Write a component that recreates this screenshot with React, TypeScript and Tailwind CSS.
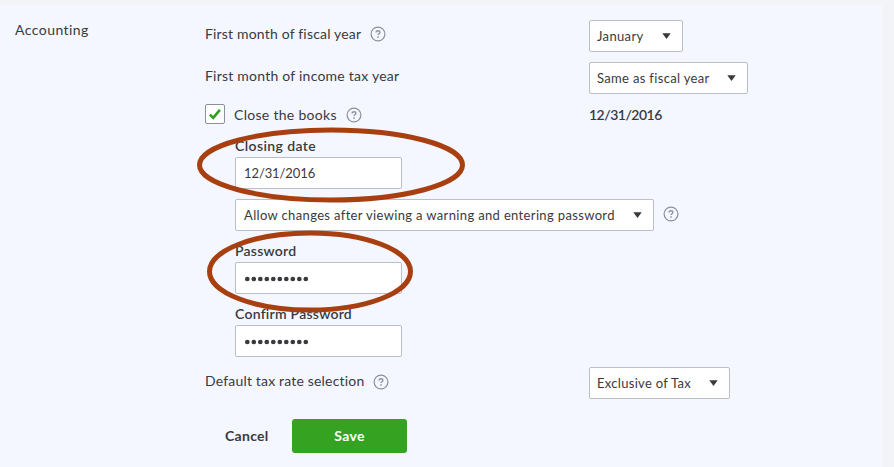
import type { ReactNode } from "react";

function Help() {
  return (
    <svg width="16" height="16" viewBox="0 0 16 16" fill="none" stroke="#8d9096" className="shrink-0">
      <circle cx="8" cy="8" r="6.9" strokeWidth="1.2" />
      <path d="M6.1 6.5C6.1 5.3 6.9 4.7 8 4.7s1.9.7 1.9 1.6c0 1.4-1.9 1.4-1.9 2.8" strokeWidth="1.4" />
      <path d="M8 10.2v1.5" strokeWidth="1.5" />
    </svg>
  );
}

function Select({ className, text, children }: { className: string; text: string; children: ReactNode }) {
  return (
    <div className={`flex h-8 shrink-0 items-center justify-between rounded-[2px] border border-[#babec5] bg-white pr-[11.5px] ${className}`}>
      <span className={`whitespace-nowrap pt-0.5 text-[13px] ${text}`}>{children}</span>
      <svg width="9" height="6" viewBox="0 0 9 6" className="shrink-0">
        <path d="M.3.3h8.4L4.5 6z" fill="#393a3d" />
      </svg>
    </div>
  );
}

function Input({ children }: { children: ReactNode }) {
  return (
    <div className="flex h-8 w-[167px] items-center rounded-[2px] border border-[#babec5] bg-white pl-2">{children}</div>
  );
}

function Dots() {
  return (
    <svg width="68" height="6" viewBox="0 0 68 6" fill="#393a3d" className="mt-px">
      {Array.from({ length: 10 }, (_, i) => (
        <circle key={i} cx={3.3 + i * 6.5} cy="3" r="2.35" />
      ))}
    </svg>
  );
}

export default function App() {
  return (
    <div className="relative h-[467px] w-[894px] overflow-hidden bg-[#f3f4f8] pt-[5px] font-['Lato','Noto_Sans',sans-serif] text-[14px] text-[#393a3d]">
      <div className="flex h-[462px] w-[882px] bg-[#f4f7ff] pt-[15px]">
        <div className="w-[205px] pl-[15px] leading-5 tracking-[0.45px]">Accounting</div>
        <div className="flex flex-col">
          <div className="flex h-8">
            <div className="flex w-[384px] items-center gap-[9px] pb-1">
              <span className="pb-0.5 tracking-[0.18px]">First month of fiscal year</span>
              <Help />
            </div>
            <Select className="w-[94px] pl-[7px]" text="tracking-[0.35px]">January</Select>
          </div>
          <div className="mt-2.5 flex h-8">
            <div className="flex w-[384px] items-center pb-1">
              <span className="pb-0.5 tracking-[0.23px]">First month of income tax year</span>
            </div>
            <Select className="w-[159px] pl-[7px]" text="tracking-[0.33px]">Same as fiscal year</Select>
          </div>
          <div className="mt-2.5 flex h-[21px]">
            <div className="flex w-[384px]">
              <div className="flex size-5 items-center justify-center rounded-[2px] border border-[#8d9096] bg-white">
                <svg width="12" height="11" viewBox="0 0 12 11" fill="none" stroke="#2ca01c" strokeWidth="2.6">
                  <path d="M.9 5.6l3.3 3.3L10.9.9" />
                </svg>
              </div>
              <span className="ml-[9px] leading-[22px] tracking-[0.3px]">Close the books</span>
              <span className="ml-[9px] pt-[3px]"><Help /></span>
            </div>
            <span className="font-semibold leading-[21px] tracking-[-0.5px]">12/31/2016</span>
          </div>
          <div className="mt-[11px] flex flex-col pl-[30px]">
            <div className="h-[21px] leading-[19px] font-semibold tracking-[0.4px]">Closing date</div>
            <Input><span className="pt-0.5 text-[13px] tracking-[-0.1px]">12/31/2016</span></Input>
            <div className="mt-2.5 flex gap-[9px]">
              <Select className="w-[419px] pl-2" text="tracking-[0.35px]">
                Allow changes after viewing a warning and entering password
              </Select>
              <span className="pt-[7px]"><Help /></span>
            </div>
            <div className="mt-2.5 h-[21px] leading-[19px] font-semibold tracking-[0.25px]">Password</div>
            <Input><Dots /></Input>
            <div className="mt-2.5 h-[21px] leading-[19px] font-semibold tracking-[0.25px]">Confirm Password</div>
            <Input><Dots /></Input>
          </div>
          <div className="mt-2.5 flex h-8">
            <div className="flex w-[384px] items-center gap-[9px] pb-[3px]">
              <span className="pb-0.5 tracking-[0.18px]">Default tax rate selection</span>
              <Help />
            </div>
            <Select className="w-[141px] pl-[7px]" text="tracking-[0.3px]">Exclusive of Tax</Select>
          </div>
          <div className="mt-5 flex h-[34px] items-center pl-5 font-bold tracking-[0.3px]">
            <button className="w-[67px] pb-0.5 text-left">Cancel</button>
            <button className="h-[34px] w-[115px] rounded-[3px] bg-[#35a321] pb-0.5 text-white">Save</button>
          </div>
        </div>
      </div>
      <svg className="absolute inset-0" width="894" height="467" fill="none" stroke="#a83f10" strokeWidth="5">
        <ellipse cx="331" cy="165" rx="131.5" ry="35" />
        <ellipse cx="310" cy="271.5" rx="100.5" ry="38.5" />
      </svg>
    </div>
  );
}
